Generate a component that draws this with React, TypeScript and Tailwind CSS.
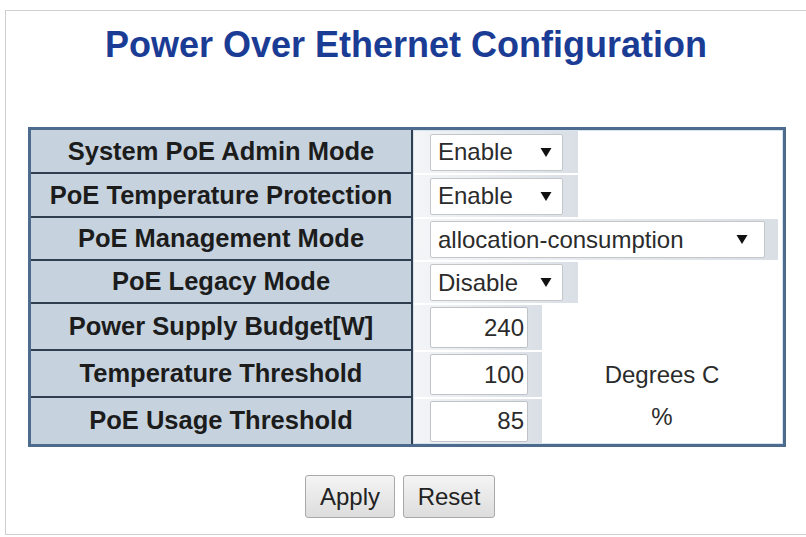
const rows = [
  { label: "System PoE Admin Mode", h: "h-[44px]", kind: "select", value: "Enable" },
  { label: "PoE Temperature Protection", h: "h-[44px]", kind: "select", value: "Enable" },
  { label: "PoE Management Mode", h: "h-[43px]", kind: "wide", value: "allocation-consumption" },
  { label: "PoE Legacy Mode", h: "h-[43px]", kind: "select", value: "Disable" },
  { label: "Power Supply Budget[W]", h: "h-[47px]", kind: "input", value: "240", unit: "" },
  { label: "Temperature Threshold", h: "h-[47px]", kind: "input", value: "100", unit: "Degrees C" },
  { label: "PoE Usage Threshold", h: "h-[44px]", kind: "input", value: "85", unit: "%" },
];

const Arrow = () => (
  <svg width="12" height="11" viewBox="0 0 12 11" className="shrink-0">
    <path d="M0.5 1 L11.5 1 L6 10 Z" fill="#111" />
  </svg>
);

const Control = ({ kind, value, unit }: { kind: string; value: string; unit?: string }) => {
  if (kind === "input") {
    return (
      <div className="flex h-full items-center">
        <div className="flex h-full items-center bg-gradient-to-r from-[#f3f5f7] to-[#d9dfe5] pl-[16px] pr-[14px]">
          <div className="flex h-[41px] w-[98px] items-center justify-end rounded-[2px] border border-[#bfc3c7] bg-white pr-[3px] text-[24px] text-[#2b2b2b]">
            {value}
          </div>
        </div>
        <div className={`flex-1 text-center text-[24px] text-[#2b2b2b] ${unit === "%" ? "pb-[8px]" : ""}`}>
          {unit}
        </div>
      </div>
    );
  }
  const wide = kind === "wide";
  return (
    <div className="flex h-full items-center">
      <div
        className={`flex h-full items-center bg-gradient-to-r from-[#f3f5f7] to-[#d9dfe5] pl-[16px] ${wide ? "pr-[13px]" : "pr-[15px]"}`}
      >
        <div
          className={`flex h-[37px] items-center justify-between rounded-[2px] border border-[#c4c7ca] bg-white pl-[7px] text-[24px] text-[#2b2b2b] ${wide ? "w-[335px] pr-[16px]" : "w-[133px] pr-[10px]"}`}
        >
          <span>{value}</span>
          <Arrow />
        </div>
      </div>
    </div>
  );
};

export default function App() {
  return (
    <div className="h-[537px] w-[806px] bg-white pt-[10px] pl-[5px] font-['Liberation_Sans',Arial,sans-serif]">
      <div className="h-[525px] w-[801px] border-t border-b border-l border-[#cfcfcf]">
        <h1 className="pt-[14px] text-center text-[36px] leading-[40px] font-bold text-[#1b3c95]">
          Power Over Ethernet Configuration
        </h1>

        <div className="mt-[62px] ml-[22px] flex w-[758px] border-[3px] border-[#4d6c8d]">
          <div className="w-[382px] border-r-2 border-[#2f3f50] bg-[#c6d3df]">
            {rows.map((r, i) => (
              <div
                key={r.label}
                className={`flex items-center justify-center text-[25.5px] font-bold text-[#1c1c1c] ${r.h} ${i < rows.length - 1 ? "border-b-2 border-[#2f3f50]" : ""}`}
              >
                {r.label}
              </div>
            ))}
          </div>
          <div className="flex-1 border border-[#d6e3ef] bg-white">
            {rows.map((r, i) => (
              <div key={r.label} className={`${r.h} ${i < rows.length - 1 ? "border-b-2 border-white" : ""}`}>
                <Control kind={r.kind} value={r.value} unit={r.unit} />
              </div>
            ))}
          </div>
        </div>

        <div className="mt-[28px] flex justify-center gap-[8px] pr-[12px]">
          <button className="h-[43px] w-[90px] rounded-[3px] border border-[#a9a9a9] bg-gradient-to-b from-[#f4f4f4] to-[#dddddd] text-[24px] text-[#222]">
            Apply
          </button>
          <button className="h-[43px] w-[92px] rounded-[3px] border border-[#a9a9a9] bg-gradient-to-b from-[#f4f4f4] to-[#dddddd] text-[24px] text-[#222]">
            Reset
          </button>
        </div>
      </div>
    </div>
  );
}
